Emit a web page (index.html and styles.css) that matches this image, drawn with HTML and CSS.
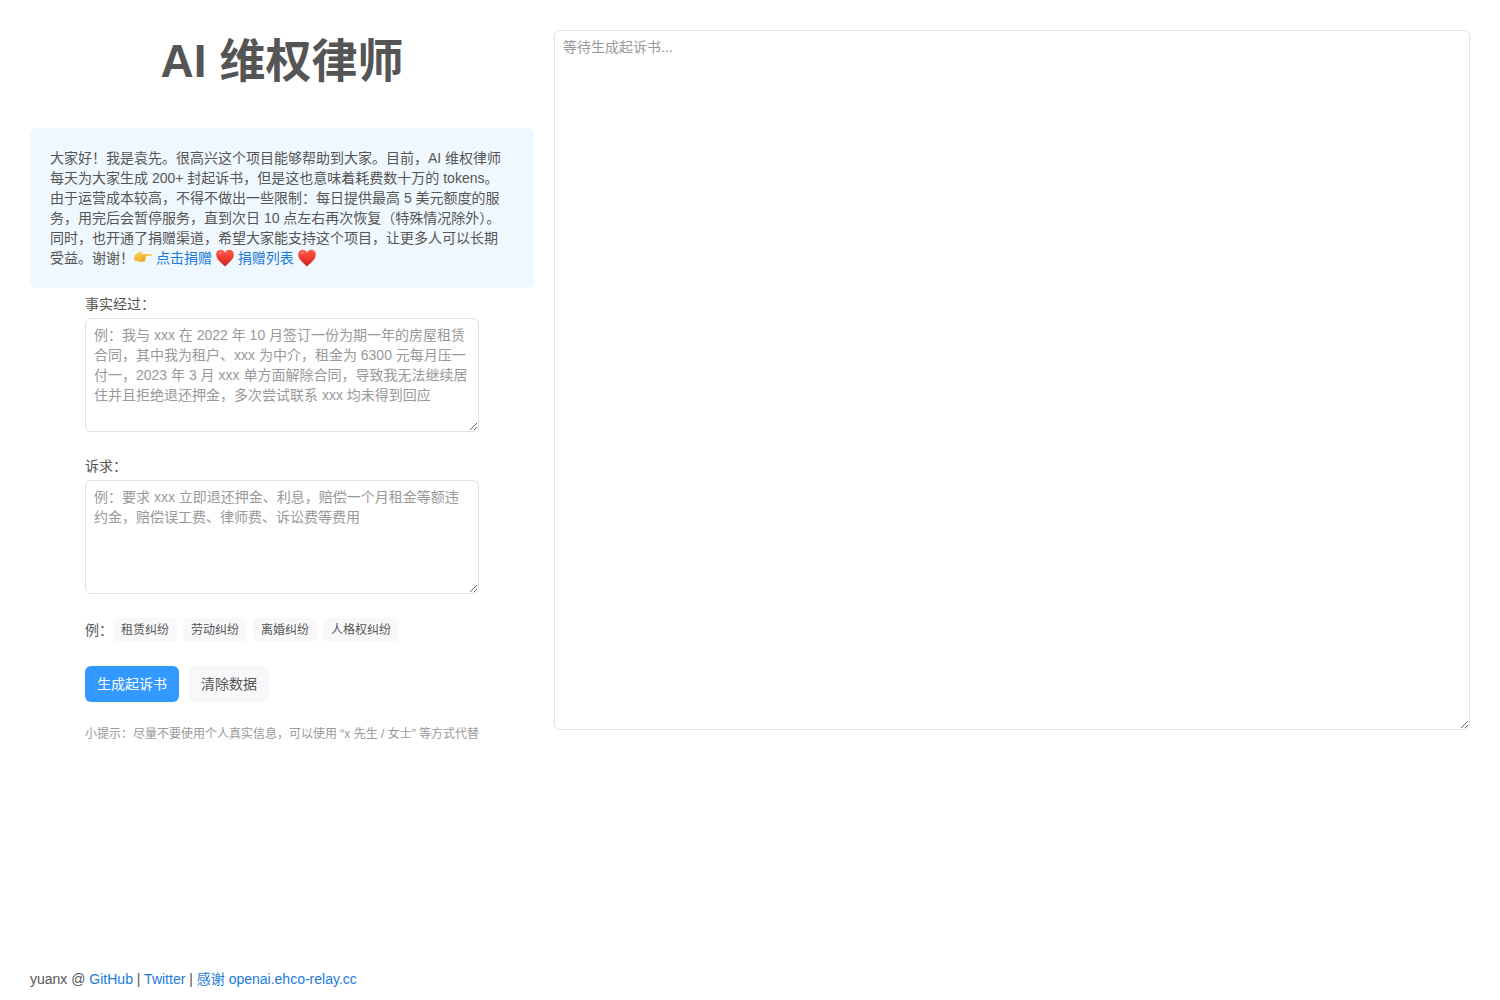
FILE: index.html
```
<!DOCTYPE html>
<html lang="zh-CN">
<head>
  <meta charset="UTF-8">
  <meta name="viewport" content="width=device-width, initial-scale=1.0">
  <title>AI 维权律师</title>
  <link rel="stylesheet" href="styles.css">
</head>
<body>
  <svg width="0" height="0" class="symbols" aria-hidden="true">
    <defs>
      <linearGradient id="heartFill" x1="0" y1="0" x2="0" y2="1">
        <stop offset="0" stop-color="#ff5a4a"/>
        <stop offset="0.5" stop-color="#f03a30"/>
        <stop offset="1" stop-color="#c9201f"/>
      </linearGradient>
      <linearGradient id="handFill" x1="0" y1="0" x2="0" y2="1">
        <stop offset="0" stop-color="#ffdb5c"/>
        <stop offset="1" stop-color="#efa92c"/>
      </linearGradient>
      <symbol id="heart" viewBox="0 0 18 18">
        <path fill="url(#heartFill)" d="M9 17.6C6.800 14.800 .2 11.300.2 5.600.2 2.800 2.200.8 4.700.8 6.700.8 8.200 1.900 9 3.700 9.800 1.900 11.300.8 13.300.8c2.500 0 4.500 2 4.500 4.800 0 5.700-6.600 9.200-8.800 12z"/>
        <ellipse cx="4.500" cy="3.800" rx="2" ry="1.300" fill="#ff9a8c" opacity="0.6" transform="rotate(-30 4.500 3.800)"/>
      </symbol>
      <symbol id="hand" viewBox="0 0 18 12">
        <path fill="url(#handFill)" d="M.3 4.200C1.500 3.800 2.600 2.600 4.200 1.600 5.300.9 6.500.2 7.600.4c1 .2.900 1.200.1 1.700l-1 .8h10c1.400 0 1.400 2.100 0 2.200h-5.200c1 .3.900 1.700-.1 1.900.8.400.7 1.700-.3 1.900.6.500.3 1.600-.8 1.700-2 .3-5.300.3-7-.3C2.200 9.900 1.300 9.600.3 9.600z"/>
        <path fill="none" stroke="#d18b1c" stroke-width="0.500" d="M6.700 2.900 5.500 4M11.500 5.100H7.700M11.300 7H7.700M10.900 8.900H7.500"/>
      </symbol>
    </defs>
  </svg>

  <main class="container">
    <section class="left">
      <h1>AI 维权律师</h1>
      <p class="notice">
        大家好！我是袁先。很高兴这个项目能够帮助到大家。目前，AI 维权律师每天为大家生成 200+ 封起诉书，但是这也意味着耗费数十万的 tokens。由于运营成本较高，不得不做出一些限制：每日提供最高 5 美元额度的服务，用完后会暂停服务，直到次日 10 点左右再次恢复（特殊情况除外）。同时，也开通了捐赠渠道，希望大家能支持这个项目，让更多人可以长期受益。谢谢！<svg class="emoji hand" role="img" aria-label="指向"><use href="#hand"/></svg>
        <a href="#donate">点击捐赠</a>
        <svg class="emoji" role="img" aria-label="爱心"><use href="#heart"/></svg>
        <a href="#donors">捐赠列表</a>
        <svg class="emoji" role="img" aria-label="爱心"><use href="#heart"/></svg>
      </p>

      <form id="lawForm">
        <div class="field">
          <label for="facts">事实经过：</label>
          <textarea id="facts" rows="5" placeholder="例：我与 xxx 在 2022 年 10 月签订一份为期一年的房屋租赁合同，其中我为租户、xxx 为中介，租金为 6300 元每月压一付一，2023 年 3 月 xxx 单方面解除合同，导致我无法继续居住并且拒绝退还押金，多次尝试联系 xxx 均未得到回应"></textarea>
        </div>
        <div class="field">
          <label for="appeal">诉求：</label>
          <textarea id="appeal" rows="5" placeholder="例：要求 xxx 立即退还押金、利息，赔偿一个月租金等额违约金，赔偿误工费、律师费、诉讼费等费用"></textarea>
        </div>
        <div class="examples">
          <span>例：</span>
          <button type="button" class="tag">租赁纠纷</button>
          <button type="button" class="tag">劳动纠纷</button>
          <button type="button" class="tag">离婚纠纷</button>
          <button type="button" class="tag">人格权纠纷</button>
        </div>
        <div class="actions">
          <button type="button" class="btn primary">生成起诉书</button>
          <button type="reset" class="btn">清除数据</button>
        </div>
        <p class="hint">小提示：尽量不要使用个人真实信息，可以使用 “x 先生 / 女士” 等方式代替</p>
      </form>
    </section>

    <section class="right">
      <textarea id="result" class="result" aria-label="起诉书" placeholder="等待生成起诉书..."></textarea>
    </section>
  </main>

  <footer>
    yuanx @ <a href="#github">GitHub</a> | <a href="#twitter">Twitter</a> | <a href="#thanks">感谢 openai.ehco-relay.cc</a>
  </footer>
</body>
</html>
```
FILE: styles.css
```
* {
  box-sizing: border-box;
}

body {
  margin: 0;
  min-height: 100vh;
  display: flex;
  flex-direction: column;
  background: #fff;
  color: #555;
  font-family: "Liberation Sans", "Noto Sans CJK SC", sans-serif;
  font-size: 14px;
  line-height: 20px;
}

a {
  color: #1a7ad9;
  text-decoration: none;
}

a:hover {
  text-decoration: underline;
}

.symbols {
  position: absolute;
}

.container {
  display: grid;
  grid-template-columns: 35% 1fr;
  column-gap: 20px;
  padding: 30px;
}

h1 {
  margin: 0 0 36px;
  font-size: 46px;
  line-height: 62px;
  text-align: center;
}

.notice {
  margin: 0;
  padding: 20px 28px 20px 20px;
  background: #f0f8ff;
  border-radius: 6px;
}

.emoji {
  width: 18px;
  height: 18px;
  margin: -2px 0;
  vertical-align: -2px;
}

.emoji.hand {
  height: 12px;
  margin: 0;
  vertical-align: 0;
}

form {
  max-width: 394px;
  margin: 6px auto 0;
}

.field {
  margin-bottom: 24px;
}

label {
  display: block;
  margin-bottom: 4px;
}

textarea {
  display: block;
  width: 100%;
  padding: 6px 8px;
  border: 1px solid #e0e0e0;
  border-radius: 6px;
  background: #fff;
  color: inherit;
  font: inherit;
  resize: vertical;
}

textarea::placeholder {
  color: #999;
}

textarea:focus {
  outline: none;
  border-color: #3399ff;
}

.result {
  height: 70vh;
}

button {
  border: none;
  border-radius: 6px;
  background: #f8f8fa;
  color: inherit;
  font: inherit;
  cursor: pointer;
}

.examples {
  display: flex;
  flex-wrap: wrap;
  align-items: center;
  gap: 6px;
  margin-bottom: 24px;
}

.examples span {
  margin-right: -6px;
}

.tag {
  height: 24px;
  padding: 0 8px;
  font-size: 12px;
}

.actions {
  display: flex;
  gap: 10px;
  margin-bottom: 22px;
}

.btn {
  height: 36px;
  padding: 0 12px;
}

.btn.primary {
  background: #3399ff;
  color: #fff;
}

.hint {
  margin: 0;
  color: #999;
  font-size: 12px;
}

footer {
  margin-top: auto;
  padding: 11px 30px;
}

@media (max-width: 900px) {
  .container {
    grid-template-columns: 1fr;
    row-gap: 30px;
  }
}
```
